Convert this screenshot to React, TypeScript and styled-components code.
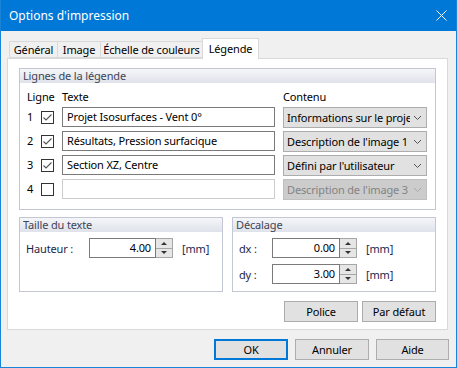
import React from 'react';
import styled, { createGlobalStyle } from 'styled-components';

const GlobalStyle = createGlobalStyle`
  html, body {
    margin: 0;
    padding: 0;
    background: #ffffff;
  }
  body {
    font-family: "Segoe UI", "Noto Sans", sans-serif;
    font-size: 11px;
    letter-spacing: -0.15px;
    color: #000;
  }
  * {
    box-sizing: border-box;
  }
`;

const Window = styled.div`
  width: 457px;
  height: 368px;
  background: #f0f0f0;
  border: 1px solid #1883d7;
  border-top: none;
  display: flex;
  flex-direction: column;
`;

const TitleBar = styled.div`
  height: 31px;
  background: #0078d7;
  color: #fff;
  font-size: 12px;
  letter-spacing: 0;
  display: flex;
  align-items: center;
  padding-left: 8px;
`;

const TitleText = styled.span`
  flex: 1;
`;

const CloseIcon = styled.svg`
  width: 11px;
  height: 11px;
  margin-right: 9px;
`;

const Body = styled.div`
  flex: 1;
  display: flex;
  flex-direction: column;
  padding: 7px 0 0 6px;
`;

const TabStrip = styled.div`
  display: flex;
  align-items: flex-end;
  height: 20px;
  padding-left: 2px;
`;

const Tab = styled.div<{ $w: number; $active?: boolean }>`
  width: ${(p) => p.$w + 1}px;
  margin-right: -1px;
  height: ${(p) => (p.$active ? 21 : 17)}px;
  margin-bottom: ${(p) => (p.$active ? -1 : 0)}px;
  background: ${(p) => (p.$active ? '#ffffff' : '#f0f0f0')};
  border: 1px solid #d9d9d9;
  border-bottom: ${(p) => (p.$active ? 'none' : '1px solid #d9d9d9')};
  position: relative;
  z-index: ${(p) => (p.$active ? 2 : 1)};
  display: flex;
  align-items: ${(p) => (p.$active ? 'flex-start' : 'center')};
  padding-top: ${(p) => (p.$active ? 2 : 0)}px;
  justify-content: center;
  white-space: nowrap;
`;

const Panel = styled.div`
  width: 441px;
  height: 272px;
  background: #fff;
  border: 1px solid #d9d9d9;
  padding: 9px 11px 0 11px;
  display: flex;
  flex-direction: column;
  position: relative;
  z-index: 1;
`;

const Group = styled.div<{ $w: number; $h: number }>`
  width: ${(p) => p.$w}px;
  height: ${(p) => p.$h}px;
  border: 1px solid #c3c7d3;
  display: flex;
  flex-direction: column;
`;

const GroupHeader = styled.div`
  height: 14px;
  line-height: 14px;
  padding-left: 3px;
  color: #3e4457;
  background: linear-gradient(#f5f6f9, #dfe2ea);
  white-space: nowrap;
`;

const LinesGrid = styled.div`
  display: grid;
  grid-template-columns: 14px 21px 221px 144px;
  grid-template-rows: 16px repeat(4, 21px);
  row-gap: 3px;
  padding: 5px 0 0 7px;
  align-items: start;
`;

const ColLabel = styled.div<{ $span?: boolean }>`
  height: 16px;
  line-height: 18px;
  white-space: nowrap;
  grid-column: ${(p) => (p.$span ? '1 / 3' : 'auto')};
`;

const Line = styled.div`
  display: contents;
`;

const Num = styled.div`
  height: 20px;
  line-height: 20px;
`;

const CheckBox = styled.div`
  width: 13px;
  height: 13px;
  margin-top: 4px;
  border: 1px solid #333;
  background: #fff;
  display: flex;
  align-items: center;
  justify-content: center;
`;

const Edit = styled.div<{ $disabled?: boolean }>`
  width: 213px;
  height: 20px;
  line-height: 18px;
  border: 1px solid ${(p) => (p.$disabled ? '#cccccc' : '#7a7a7a')};
  background: #fff;
  padding-left: 4px;
  white-space: nowrap;
  overflow: hidden;
`;

const Combo = styled.div<{ $disabled?: boolean }>`
  width: 144px;
  height: 21px;
  border: 1px solid ${(p) => (p.$disabled ? '#bfbfbf' : '#adadad')};
  background: ${(p) => (p.$disabled ? '#cccccc' : '#e1e1e1')};
  color: ${(p) => (p.$disabled ? '#838383' : '#000')};
  display: flex;
  align-items: center;
  padding-left: 3px;
`;

const ComboText = styled.span`
  flex: 1;
  overflow: hidden;
  white-space: nowrap;
`;

const ComboArrow = styled.svg`
  width: 14px;
  height: 6px;
  flex: none;
  margin-right: 2px;
`;

const GroupsRow = styled.div`
  display: flex;
  gap: 9px;
  margin-top: 7px;
`;

const FieldGrid = styled.div<{ $cols: string }>`
  display: grid;
  grid-template-columns: ${(p) => p.$cols};
  grid-auto-rows: 20px;
  row-gap: 6px;
  align-items: center;
  padding: 6px 0 0 6px;
`;

const FieldLabel = styled.div`
  color: #1c1f4a;
  white-space: nowrap;
`;

const Spin = styled.div`
  display: flex;
  height: 20px;
`;

const SpinEdit = styled.div<{ $w: number }>`
  width: ${(p) => p.$w}px;
  height: 20px;
  line-height: 18px;
  border: 1px solid #7a7a7a;
  text-align: right;
  padding-right: 4px;
  background: #fff;
`;

const SpinButtons = styled.div`
  width: 17px;
  height: 20px;
  border: 1px solid #a6a6a6;
  border-left: none;
  display: flex;
  flex-direction: column;
  background: #e6e6e6;
`;

const SpinHalf = styled.div<{ $top?: boolean }>`
  flex: 1;
  display: flex;
  align-items: center;
  justify-content: center;
  border-bottom: ${(p) => (p.$top ? '1px solid #a6a6a6' : 'none')};
`;

const Arrow = styled.div<{ $up?: boolean }>`
  width: 0;
  height: 0;
  border-left: 3px solid transparent;
  border-right: 3px solid transparent;
  ${(p) => (p.$up ? 'border-bottom: 3px solid #333;' : 'border-top: 3px solid #333;')}
`;

const Unit = styled.div`
  color: #1c1f4a;
  padding-left: 9px;
`;

const ButtonRow = styled.div<{ $mt: number; $mr: number }>`
  display: flex;
  justify-content: flex-end;
  gap: 4px;
  margin-top: ${(p) => p.$mt}px;
  margin-right: ${(p) => p.$mr}px;
`;

const Button = styled.button<{ $w: number; $default?: boolean }>`
  width: ${(p) => p.$w}px;
  height: 21px;
  padding: 0;
  font: inherit;
  letter-spacing: inherit;
  color: #000;
  background: #e1e1e1;
  border: ${(p) => (p.$default ? '2px solid #0078d7' : '1px solid #adadad')};
`;

const BottomBar = styled(ButtonRow)`
  gap: 7px;
`;

const Check = () => (
  <svg width="11" height="11" viewBox="0 0 11 11">
    <path d="M1.5 5.5 L4 8 L9.5 2.5" fill="none" stroke="#555" strokeWidth="1.1" />
  </svg>
);

const Chevron = ({ color }: { color: string }) => (
  <ComboArrow viewBox="0 0 14 6">
    <path d="M4 1 L7.5 4.5 L11 1" fill="none" stroke={color} strokeWidth="1" />
  </ComboArrow>
);

const SpinBox = ({ value, w }: { value: string; w: number }) => (
  <Spin>
    <SpinEdit $w={w}>{value}</SpinEdit>
    <SpinButtons>
      <SpinHalf $top>
        <Arrow $up />
      </SpinHalf>
      <SpinHalf>
        <Arrow />
      </SpinHalf>
    </SpinButtons>
  </Spin>
);

const lines = [
  { n: 1, on: true, text: 'Projet Isosurfaces - Vent 0°', content: 'Informations sur le projet' },
  { n: 2, on: true, text: 'Résultats, Pression surfacique', content: "Description de l'image 1" },
  { n: 3, on: true, text: 'Section XZ, Centre', content: "Défini par l'utilisateur" },
  { n: 4, on: false, text: '', content: "Description de l'image 3" },
];

export default function App() {
  return (
    <>
      <GlobalStyle />
      <Window>
        <TitleBar>
          <TitleText>Options d'impression</TitleText>
          <CloseIcon viewBox="0 0 11 11">
            <path d="M0.5 0.5 L10.5 10.5 M10.5 0.5 L0.5 10.5" stroke="#fff" strokeWidth="1" />
          </CloseIcon>
        </TitleBar>

        <Body>
          {/* Onglets */}
          <TabStrip>
            <Tab $w={48}>Général</Tab>
            <Tab $w={43}>Image</Tab>
            <Tab $w={102}>Échelle de couleurs</Tab>
            <Tab $w={56} $active>Légende</Tab>
          </TabStrip>

          <Panel>
            {/* Lignes de la légende */}
            <Group $w={417} $h={142}>
              <GroupHeader>Lignes de la légende</GroupHeader>
              <LinesGrid>
                <ColLabel $span>Ligne</ColLabel>
                <ColLabel>Texte</ColLabel>
                <ColLabel>Contenu</ColLabel>
                {lines.map((l) => (
                  <Line key={l.n}>
                    <Num>{l.n}</Num>
                    <CheckBox>{l.on && <Check />}</CheckBox>
                    <Edit $disabled={!l.on}>{l.text}</Edit>
                    <Combo $disabled={!l.on}>
                      <ComboText>{l.content}</ComboText>
                      <Chevron color={l.on ? '#555' : '#a8a8a8'} />
                    </Combo>
                  </Line>
                ))}
              </LinesGrid>
            </Group>

            <GroupsRow>
              {/* Taille du texte */}
              <Group $w={204} $h={75}>
                <GroupHeader>Taille du texte</GroupHeader>
                <FieldGrid $cols="63px 84px auto">
                  <FieldLabel>Hauteur :</FieldLabel>
                  <SpinBox value="4.00" w={67} />
                  <Unit>[mm]</Unit>
                </FieldGrid>
              </Group>

              {/* Décalage */}
              <Group $w={204} $h={75}>
                <GroupHeader>Décalage</GroupHeader>
                <FieldGrid $cols="33px 85px auto">
                  <FieldLabel>dx :</FieldLabel>
                  <SpinBox value="0.00" w={68} />
                  <Unit>[mm]</Unit>
                  <FieldLabel>dy :</FieldLabel>
                  <SpinBox value="3.00" w={68} />
                  <Unit>[mm]</Unit>
                </FieldGrid>
              </Group>
            </GroupsRow>

            <ButtonRow $mt={9} $mr={0}>
              <Button $w={74}>Police</Button>
              <Button $w={74}>Par défaut</Button>
            </ButtonRow>
          </Panel>

          <BottomBar $mt={9} $mr={7}>
            <Button $w={74} $default>OK</Button>
            <Button $w={74}>Annuler</Button>
            <Button $w={73}>Aide</Button>
          </BottomBar>
        </Body>
      </Window>
    </>
  );
}
